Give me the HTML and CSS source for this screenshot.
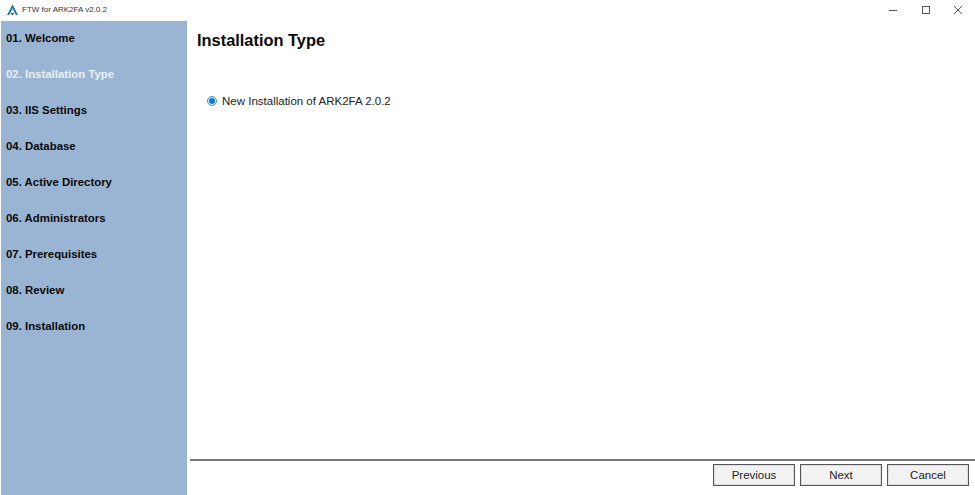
FILE: index.html
```html
<!DOCTYPE html>
<html lang="en">
<head>
  <meta charset="UTF-8">
  <title>FTW for ARK2FA v2.0.2</title>
  <link rel="stylesheet" href="styles.css">
</head>
<body>
  <div class="window">
    <div class="titlebar">
      <svg class="logo" width="11" height="12" viewBox="0 0 11 12">
        <path d="M5.5 0.2 L11 11 L8.8 11 L5.5 4.6 L2.2 11 L0 11 Z" fill="#1f77b8"/>
        <path d="M3.8 9 L7.2 9 L5.5 11.6 Z" fill="#1b3f66"/>
      </svg>
      <span class="title">FTW for ARK2FA v2.0.2</span>
      <div class="controls">
        <svg width="10" height="10" viewBox="0 0 10 10"><path d="M1 5.5H9" stroke="#555" stroke-width="1"/></svg>
        <svg width="10" height="10" viewBox="0 0 10 10"><rect x="1.5" y="1.5" width="7" height="7" fill="none" stroke="#555" stroke-width="1"/></svg>
        <svg width="10" height="10" viewBox="0 0 10 10"><path d="M1 1L9 9M9 1L1 9" stroke="#555" stroke-width="1"/></svg>
      </div>
    </div>
    <div class="body">
      <nav class="sidebar">
        <div class="step">01. Welcome</div>
        <div class="step current">02. Installation Type</div>
        <div class="step">03. IIS Settings</div>
        <div class="step">04. Database</div>
        <div class="step">05. Active Directory</div>
        <div class="step">06. Administrators</div>
        <div class="step">07. Prerequisites</div>
        <div class="step">08. Review</div>
        <div class="step">09. Installation</div>
      </nav>
      <main class="main">
        <div class="content">
          <h1>Installation Type</h1>
          <label class="choice">
            <span class="radio"></span>
            New Installation of ARK2FA 2.0.2
          </label>
        </div>
        <div class="footer">
          <button>Previous</button>
          <button>Next</button>
          <button>Cancel</button>
        </div>
      </main>
    </div>
  </div>
</body>
</html>
```

FILE: styles.css
```css
* {
  box-sizing: border-box;
}
html, body {
  margin: 0;
  height: 100%;
}
body {
  font-family: "Liberation Sans", Arial, sans-serif;
  background: white;
  overflow: hidden;
}
.window {
  height: 495px;
  display: flex;
  flex-direction: column;
}
.titlebar {
  height: 21px;
  display: flex;
  align-items: center;
  padding: 0 0 2px 7px;
}
.logo {
  margin-right: 4px;
}
.title {
  font-size: 8px;
  color: #333;
}
.controls {
  margin-left: auto;
  display: flex;
  gap: 22.5px;
  padding-right: 12px;
}
.body {
  flex: 1;
  display: flex;
}
.sidebar {
  width: 186px;
  background: #9ab5d3;
  margin-left: 1px;
}
.step {
  height: 36px;
  line-height: 35px;
  padding-left: 5px;
  font-size: 11.4px;
  font-weight: bold;
  color: #0a0a0a;
}
.step.current {
  color: #e8eff7;
}
.main {
  flex: 1;
  display: flex;
  flex-direction: column;
  padding-left: 3px;
}
.content {
  flex: 1;
  padding: 9px 0 0 7px;
}
h1 {
  margin: 0 0 45px;
  font-size: 16.4px;
  line-height: 20px;
  font-weight: bold;
  color: #0a0a0a;
}
.choice {
  display: flex;
  align-items: center;
  gap: 5px;
  padding-left: 10px;
  font-size: 11.5px;
  color: #222;
}
.radio {
  width: 10px;
  height: 10px;
  border-radius: 50%;
  border: 1px solid #4a9be0;
  background: #0f78d7;
  box-shadow: inset 0 0 0 1px white;
}
.footer {
  height: 36px;
  border-top: 2px solid #777;
  display: flex;
  justify-content: flex-end;
  gap: 5px;
  padding: 3px 6px 0 0;
}
button {
  width: 82px;
  height: 22px;
  background: #f2f2f2;
  border: 1px solid #555;
  box-shadow: inset 0 0 0 1px #ddd;
  font-family: inherit;
  font-size: 11.5px;
  color: #222;
  padding: 0;
}
```
